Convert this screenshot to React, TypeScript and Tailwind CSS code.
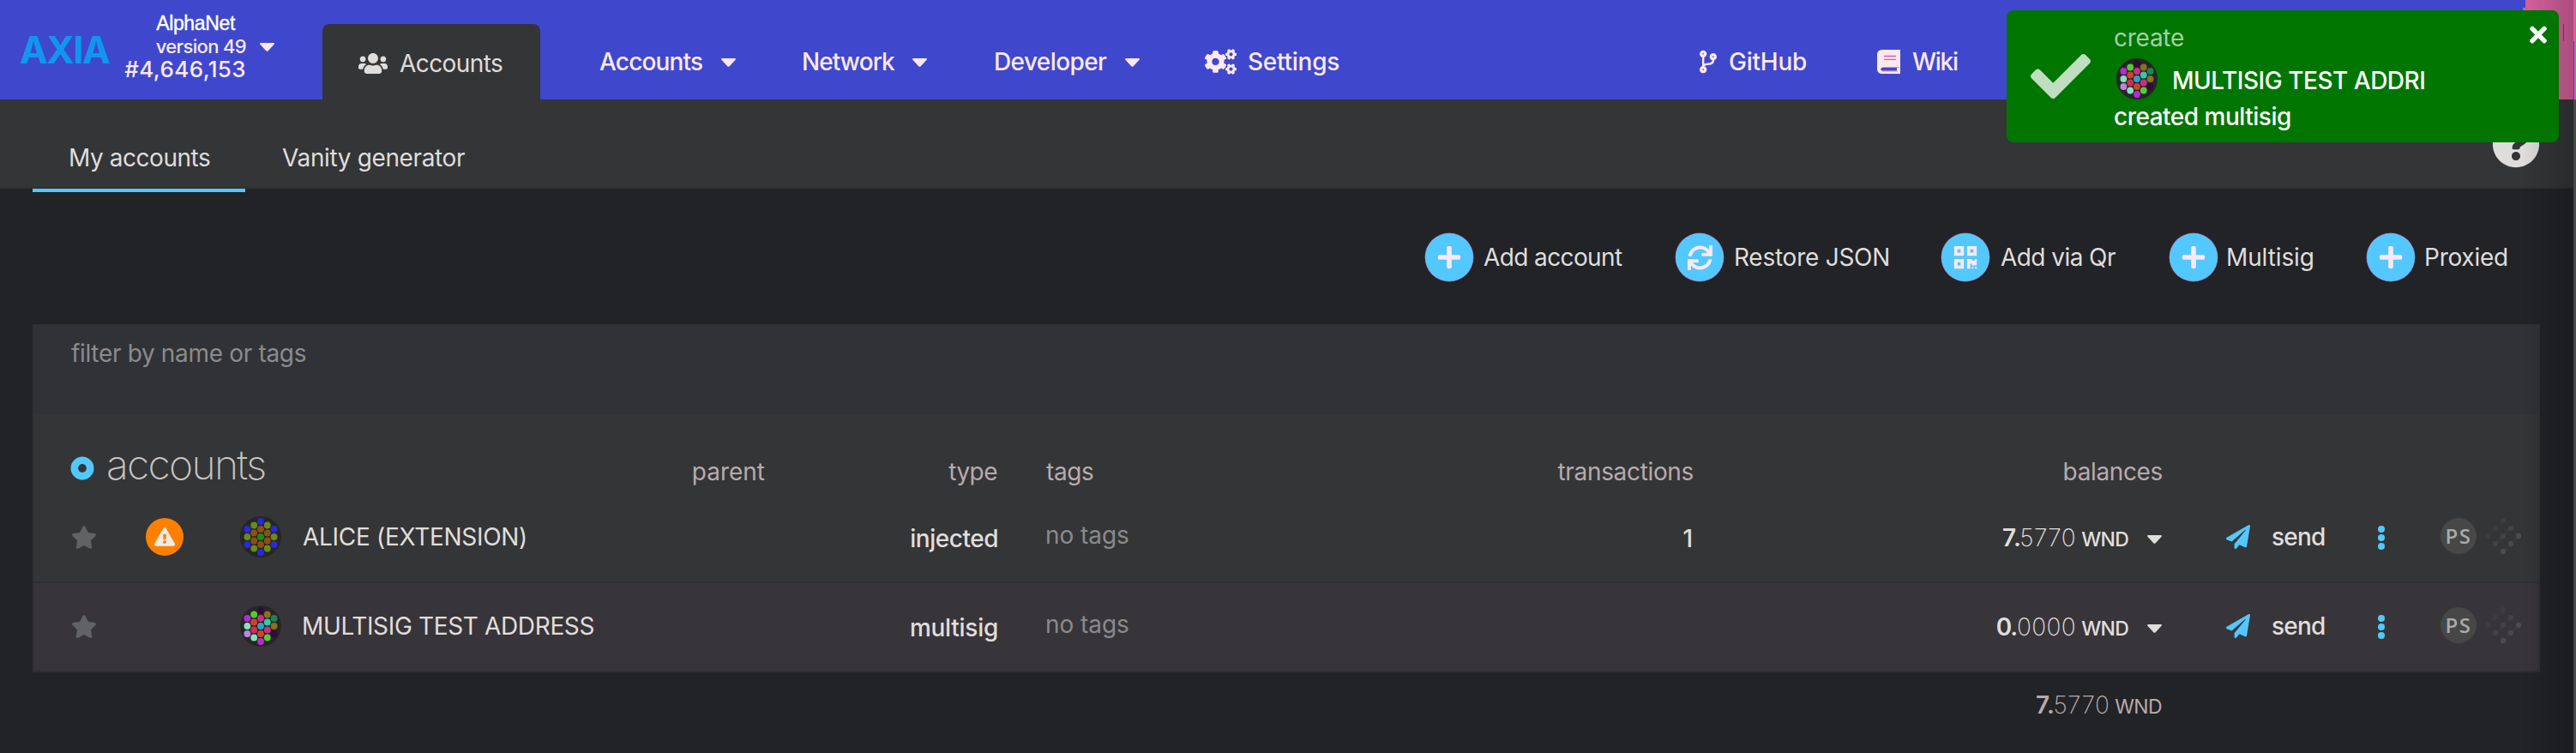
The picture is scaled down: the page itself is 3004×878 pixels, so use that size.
import type { ReactNode } from 'react';
import {
  FaCheck,
  FaCodeBranch,
  FaCogs,
  FaExclamationTriangle,
  FaPaperPlane,
  FaPlus,
  FaQrcode,
  FaQuestionCircle,
  FaStar,
  FaSync,
  FaTimes,
  FaUsers,
} from 'react-icons/fa';

const ALICE = [
  ['#2929de', '#688c18', '#2929de'],
  ['#688c18', '#8c5014', '#8c5014', '#688c18'],
  ['#2929de', '#8c5014', '#188c18', '#8c5014', '#2929de'],
  ['#688c18', '#8c5014', '#8c5014', '#688c18'],
  ['#2929de', '#688c18', '#2929de'],
];

const MULTISIG = [
  ['#b52cd2', '#86e0bb', '#c381e0'],
  ['#55cc2e', '#d23f32', '#d22d55', '#86e0bb'],
  ['#320b39', '#cb2f83', '#2ba4c6', '#cf4130', '#b52cd2'],
  ['#8a721c', '#2ecca9', '#cb2f83', '#55cc2e'],
  ['#1f8454', '#8a721c', '#320b39'],
];

function Identicon({ columns }: { columns: string[][] }) {
  return (
    <svg viewBox="-24 -24 48 48" className="size-12 shrink-0">
      <circle r="24" fill="#262626" />
      {columns.map((column, i) =>
        column.map((fill, j) => (
          <circle key={`${i}-${j}`} cx={(i - 2) * 7.8} cy={(j - (column.length - 1) / 2) * 9} r="3.9" fill={fill} />
        )),
      )}
    </svg>
  );
}

function Caret({ className }: { className: string }) {
  return (
    <svg viewBox="0 0 17 10" className={`h-[10px] w-[17px] shrink-0 ${className}`} fill="currentColor">
      <path d="M1.2 0h14.6c1 0 1.5 1.1.8 1.8L9.5 9.4c-.6.6-1.4.6-2 0L.4 1.8C-.3 1.1.2 0 1.2 0z" />
    </svg>
  );
}

function BookIcon() {
  return (
    <svg viewBox="0 0 27 28" className="ml-[83px] h-7 w-[27px] shrink-0">
      <path
        fillRule="evenodd"
        fill="#fbe8f0"
        d="M5.5 0H27v28H5.5A5.5 5.5 0 0 1 0 22.500V5.500A5.500 5.500 0 0 1 5.500 0zM6 21a1.800 1.800 0 0 0 0 3.600h17V21z"
      />
      <path d="M8.500 7.500h13M8.500 11.300h13" stroke="#d6609c" strokeWidth="1.300" strokeLinecap="round" />
      <path d="M6 20.500h20M6 25h18" stroke="#d6609c" strokeWidth=".7" />
    </svg>
  );
}

function Action({ icon, children, text }: { icon: ReactNode; children: string; text: string }) {
  return (
    <button className="flex items-center">
      <span className="flex size-14 shrink-0 items-center justify-center rounded-full bg-[#53c8ff] text-[#fbe8f0] shadow-[0_0_0_0.5px_#b0528a]">
        {icon}
      </span>
      <span className={`text-left whitespace-nowrap ${text}`}>{children}</span>
    </button>
  );
}

function PolkascanIcon() {
  return (
    <span className="ml-[61px] mb-[2px] flex size-[42px] shrink-0 items-center justify-center rounded-full bg-[#464746] font-['Open_Sans',sans-serif] text-[24px] leading-none font-semibold tracking-[1.5px] text-[#aaaaab]">
      PS
    </span>
  );
}

function SubscanIcon() {
  const dots = [
    [0, -18, '#3d3e3e'],
    [-9, -9, '#3c3d3d'],
    [9, -9, '#424343'],
    [-18, 0, '#3d3e3e'],
    [0, 0, '#424343'],
    [18, 0, '#4b4c4c'],
    [-9, 9, '#424343'],
    [9, 9, '#484949'],
    [0, 18, '#4b4c4c'],
  ] as const;
  return (
    <svg viewBox="-21 -21 42 42" className="mb-[2px] ml-[10px] size-[42px] shrink-0">
      <path d="M-18 0L0-18M-9 9L9-9M0 18L18 0" stroke="#3a3a3b" strokeWidth="5" opacity=".5" />
      {dots.map(([x, y, fill]) => (
        <circle key={`${x},${y}`} cx={x} cy={y} r="3.2" fill={fill} />
      ))}
    </svg>
  );
}

interface RowProps {
  warning?: boolean;
  icon: string[][];
  name: ReactNode;
  type: ReactNode;
  transactions?: string;
  balance: ReactNode;
  className: string;
}

function Row({ warning, icon, name, type, transactions, balance, className }: RowProps) {
  return (
    <div className={`flex h-[104px] items-center border-b-2 border-[#2f2f30] pb-[2px] pl-[43px] text-[#e0dedb] ${className}`}>
      <FaStar className="h-[29px] w-[30px] shrink-0 text-[#616263]" />
      <div className="ml-[57px] size-11 shrink-0">
        {warning && (
          <div className="flex size-11 items-center justify-center rounded-full bg-[#ff8000]">
            <FaExclamationTriangle className="size-6 text-[#ecebe9]" />
          </div>
        )}
      </div>
      <div className="ml-[66px] flex w-[620px] items-center">
        <Identicon columns={icon} />
        {name}
      </div>
      <div className="w-[264px] pt-1 text-right font-medium">{type}</div>
      <div className="ml-[55px] w-[399px] pb-1 tracking-[-0.07px] text-[#8a8a8a]">no tags</div>
      <div className="w-[356px] pt-1 text-right font-medium">{transactions}</div>
      <div className="flex w-[547px] items-center justify-end pt-1">
        {balance}
        <Caret className="mt-[2px] ml-[22px]" />
      </div>
      <FaPaperPlane className="ml-[75px] size-7 shrink-0 text-[#53c8ff]" />
      <span className="ml-[25px] w-16 font-medium tracking-[-0.79px]">send</span>
      <svg viewBox="0 0 16 28" className="mt-[2px] ml-[56px] h-7 w-4 shrink-0" fill="#53c8ff">
        <circle cx="8" cy="4" r="4" />
        <circle cx="8" cy="14" r="4" />
        <circle cx="8" cy="24" r="4" />
      </svg>
      <PolkascanIcon />
      <SubscanIcon />
    </div>
  );
}

export default function App() {
  return (
    <div className="relative h-[878px] w-[3004px] overflow-hidden bg-[#222327] font-[Inter,sans-serif] text-[28px] leading-9 text-[#dfdddb]">
      <header className="flex h-[116px] bg-[#3f48cc] text-[#fbe8f0]">
        <div className="ml-[23px] w-[108px] shrink-0 pt-[33px] text-[44px] leading-[50px] font-bold tracking-[-1.6px] whitespace-nowrap text-[#0f97ef]">
          AXIA
        </div>
        <div className="flex w-[156px] shrink-0 flex-col items-end pt-[14px] font-medium whitespace-nowrap">
          <div className="mr-[13px] h-[27px] font-['Liberation_Sans',sans-serif] text-[23px] leading-[27px] font-normal tracking-[-0.35px] text-white [-webkit-text-stroke:0.4px_white]">
            AlphaNet
          </div>
          <div className="h-[26px] text-[22px] leading-[26px] tracking-[-0.65px]">version 49</div>
          <div className="h-[27px] text-[26px] leading-[27px] tracking-[0.4px]">#4,646,153</div>
        </div>
        <Caret className="mt-[50px] ml-4" />
        <div className="mt-7 ml-[56px] flex h-[88px] w-[254px] shrink-0 items-center rounded-t-lg bg-[#343537] pl-[42px] text-[#dfdddb]">
          <FaUsers className="mt-[3px] h-[28px] w-[34px] shrink-0" />
          <span className="ml-[14px] pt-1 tracking-[-0.58px]">Accounts</span>
        </div>
        <nav className="mt-7 flex h-[88px] items-center font-medium whitespace-nowrap">
          <span className="ml-[69px] w-[121px] tracking-[-0.83px]">Accounts</span>
          <Caret className="mt-[2px] ml-[21px]" />
          <span className="ml-[77px] w-[109px] tracking-[-0.92px]">Network</span>
          <Caret className="mt-[2px] ml-5" />
          <span className="ml-[78px] w-[131px] tracking-[-0.61px]">Developer</span>
          <Caret className="mt-[2px] ml-[22px]" />
          <FaCogs className="ml-[76px] h-[30px] w-[37px] shrink-0" />
          <span className="ml-[13px] w-[107px] tracking-[-0.25px]">Settings</span>
          <FaCodeBranch className="ml-[420px] h-7 w-5 shrink-0" />
          <span className="ml-[14px] w-[90px] tracking-[-0.25px]">GitHub</span>
          <BookIcon />
          <span className="ml-[14px] tracking-[-1.26px]">Wiki</span>
        </nav>
        <div className="ml-auto flex h-[116px] w-[62px] bg-[#d6609c]">
          <div className="h-[9px] w-[3px] bg-[#3f48cc]" />
          <div className="mt-7 ml-[44px] h-5 w-px bg-[#3f48cc]" />
          <div className="mt-12 ml-[11px] h-[68px] w-px bg-[#3f48cc]" />
        </div>
      </header>

      <div className="flex h-[104px] items-start border-b-2 border-[#2e3031] bg-[#343537] pl-[38px]">
        <div className="z-10 flex h-[108px] w-[248px] shrink-0 items-center border-b-4 border-[#53c8ff] pt-8 pl-[42px] tracking-[-0.45px]">
          My accounts
        </div>
        <div className="ml-[43px] flex h-[104px] items-center pt-8 tracking-[-0.37px]">Vanity generator</div>
        <FaQuestionCircle className="mt-[24px] mr-[42px] ml-auto size-[56px] shrink-0" />
      </div>

      <div className="flex h-[158px] items-center justify-end pt-[2px] pr-20">
        <Action icon={<FaPlus className="size-[30px]" />} text="ml-3 w-[162px] tracking-[-0.61px]">
          Add account
        </Action>
        <div className="w-[62px]" />
        <Action icon={<FaSync className="size-[29px]" />} text="ml-3 w-[180px] tracking-[-0.25px]">
          Restore JSON
        </Action>
        <div className="w-[62px]" />
        <Action icon={<FaQrcode className="size-[30px]" />} text="ml-[13px] w-[134px] tracking-[-0.56px]">
          Add via Qr
        </Action>
        <div className="w-[63px]" />
        <Action icon={<FaPlus className="size-[30px]" />} text="ml-[10px] w-[101px] tracking-[-0.12px]">
          Multisig
        </Action>
        <div className="w-[63px]" />
        <Action icon={<FaPlus className="size-[30px]" />} text="ml-[11px] w-[97px] tracking-[-0.25px]">
          Proxied
        </Action>
      </div>

      <section className="mr-[42px] ml-[38px] h-[406px] border-2 border-b-0 border-[#303133] bg-[#343537]">
        <div className="h-[104px] rounded-md bg-[#313237] pt-[14px] pl-[43px] tracking-[-0.33px] text-[#8b8b8c]">
          filter by name or tags
        </div>
        <div className="flex h-[92px] items-center pt-10 text-[#b8abac]">
          <svg viewBox="-14 -14 28 28" className="mb-2 ml-[42px] size-7 shrink-0">
            <circle r="9.200" fill="none" stroke="#53c8ff" strokeWidth="8.600" />
          </svg>
          <h2 className="mb-4 ml-[14px] w-[300px] text-[48px] leading-[50px] font-extralight tracking-[-1.74px] text-[#c8c4c0]">
            accounts
          </h2>
          <span className="w-[468px] text-right">parent</span>
          <span className="w-[271px] text-right tracking-[-0.53px]">type</span>
          <span className="ml-[57px] w-[300px] tracking-[-0.4px]">tags</span>
          <span className="w-[455px] text-right tracking-[-0.34px]">transactions</span>
          <span className="w-[547px] text-right tracking-[-0.36px]">balances</span>
        </div>
        <Row
          warning
          className="bg-[#343537]"
          icon={ALICE}
          name={<span className="ml-[25px] tracking-[-0.3px]">ALICE (EXTENSION)</span>}
          type={<span className="tracking-[-0.47px]">injected</span>}
          transactions="1"
          balance={
            <div className="whitespace-nowrap">
              <span className="font-semibold tracking-[0.37px]">7.</span>
              <span className="-ml-[2px] font-extralight tracking-[0.4px]">5770</span>
              <span className="ml-[6px] text-[23px] font-medium tracking-[-0.73px]">WND</span>
            </div>
          }
        />
        <Row
          className="bg-[#38353a]"
          icon={MULTISIG}
          name={<span className="ml-[24px] tracking-[-0.35px]">MULTISIG TEST ADDRESS</span>}
          type={<span className="tracking-[-0.27px]">multisig</span>}
          balance={
            <div className="whitespace-nowrap">
              <span className="font-semibold tracking-[-1.2px]">0.</span>
              <span className="font-extralight tracking-[0.4px]">0000</span>
              <span className="ml-[6px] text-[23px] font-medium tracking-[-0.73px]">WND</span>
            </div>
          }
        />
      </section>

      <div className="pt-5 pr-[483px] text-right whitespace-nowrap text-[#b8abac]">
        <span className="font-semibold tracking-[0.37px]">7.</span>
        <span className="-ml-[2px] font-extralight tracking-[0.4px]">5770</span>
        <span className="ml-[6px] text-[23px] tracking-[-0.6px]">WND</span>
      </div>

      <div className="absolute top-0 right-[3px] h-full w-[60px] bg-linear-to-r from-transparent to-black/20" />
      <div className="absolute top-[116px] right-0 bottom-0 w-[3px] bg-[#48494b]" />

      <div className="absolute top-3 left-[2340px] flex h-[154px] w-[644px] rounded-lg bg-[#007500] pl-7 text-white">
        <FaCheck className="mt-[42px] size-[70px] shrink-0 text-[#c0dec0]" />
        <div className="ml-[27px] flex flex-col pt-[14px] font-medium whitespace-nowrap">
          <div className="h-9 font-normal tracking-[-0.26px] text-[#a3d0a3]">create</div>
          <div className="flex h-[60px] items-center">
            <div className="ml-[3px] flex">
              <Identicon columns={MULTISIG} />
            </div>
            <span className="ml-[17px] pt-1 tracking-[-0.48px]">MULTISIG TEST ADDRI</span>
          </div>
          <div className="h-7 leading-7 tracking-[-0.5px]">created multisig</div>
        </div>
        <FaTimes className="absolute top-[14px] right-[14px] h-[29px] w-5" />
      </div>
    </div>
  );
}
